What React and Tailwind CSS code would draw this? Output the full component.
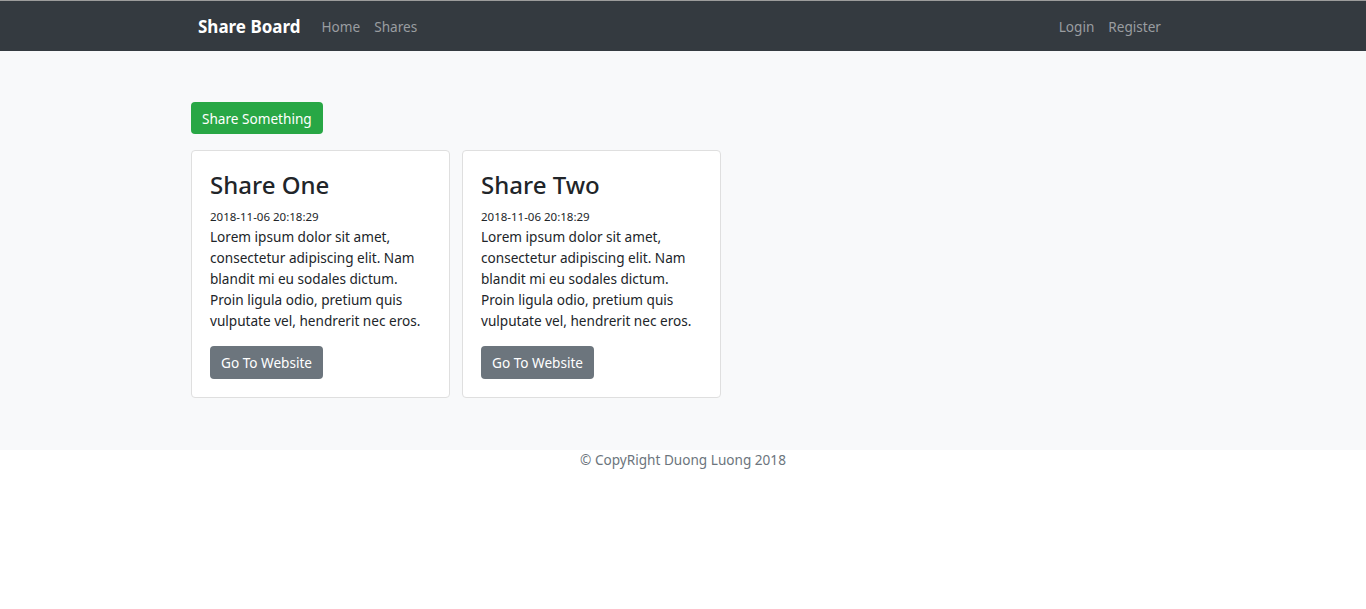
const shares = [
  { title: "Share One", date: "2018-11-06 20:18:29" },
  { title: "Share Two", date: "2018-11-06 20:18:29" },
];

const body =
  "Lorem ipsum dolor sit amet, consectetur adipiscing elit. Nam blandit mi eu sodales dictum. Proin ligula odio, pretium quis vulputate vel, hendrerit nec eros.";

const ShareCard = ({ share }) => (
  <div className="w-[259px] bg-white border border-[#dfdfdf] rounded px-[18px] pt-[19px] pb-[18px]">
    <h3 className="text-[24px] leading-[30px] text-[#212529] font-medium mb-[9px]">{share.title}</h3>
    <small className="block text-[11.5px] leading-[15px] text-[#212529]">{share.date}</small>
    <p className="text-[13.6px] leading-[21px] text-[#212529] mt-[2px] mb-[15px]">{body}</p>
    <button className="bg-[#6c757d] text-white text-[13.6px] leading-[21px] px-[11px] py-[6px] rounded">
      Go To Website
    </button>
  </div>
);

export default function App() {
  return (
    <div className="min-h-[609px] bg-white font-['Noto_Sans',sans-serif]">
      {/* Navbar */}
      <nav className="h-[51px] bg-[#343a40] border-t border-[#9c9c9c]">
        <div className="w-[984px] mx-auto h-full flex items-center pl-[7px] pt-[2px]">
          <span className="text-white text-[17px] font-bold mr-[14px]">Share Board</span>
          <a className="text-[#9a9da0] text-[13.6px] px-[7px]">Home</a>
          <a className="text-[#9a9da0] text-[13.6px] px-[7px]">Shares</a>
          <div className="ml-auto flex pr-[7px]">
            <a className="text-[#9a9da0] text-[13.6px] px-[7px]">Login</a>
            <a className="text-[#9a9da0] text-[13.6px] px-[7px]">Register</a>
          </div>
        </div>
      </nav>

      {/* Main */}
      <main className="bg-[#f8f9fa] pt-[51px] pb-[52px]">
        <div className="w-[984px] mx-auto">
          <button className="bg-[#28a745] text-white text-[13.6px] leading-[21px] px-[11px] py-[5.5px] rounded">
            Share Something
          </button>
          <div className="flex gap-[12px] mt-[16px]">
            {shares.map((s, i) => (
              <ShareCard key={i} share={s} />
            ))}
          </div>
        </div>
      </main>

      {/* Footer */}
      <footer className="text-center text-[#6c757d] text-[13.6px] leading-[21px] -mt-[1px]">
        © CopyRight Duong Luong 2018
      </footer>
    </div>
  );
}
